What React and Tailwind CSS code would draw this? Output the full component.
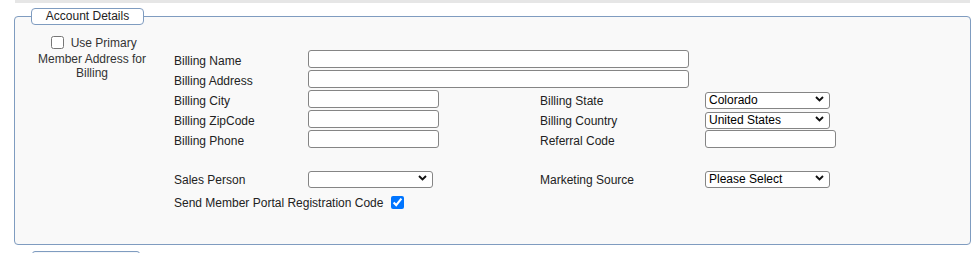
import React from 'react';

const Chevron = () => (
    <svg
        className="pointer-events-none absolute right-[6px] top-1/2 -translate-y-1/2"
        width="9"
        height="6"
        viewBox="0 0 9 6"
        fill="none"
    >
        <path d="M1 1l3.5 3.5L8 1" stroke="#111" strokeWidth="1.9" />
    </svg>
);

const Select = ({ value, options = [] }) => (
    <div className="relative w-[125px] h-[17px]">
        <select
            defaultValue={value}
            className="appearance-none w-full h-full pl-[3px] pr-[18px] bg-white border border-[#858585] rounded-[3px] text-[12px] leading-[15px] text-black outline-none"
        >
            {options.map((o) => (
                <option key={o} value={o}>
                    {o}
                </option>
            ))}
        </select>
        <Chevron />
    </div>
);

const TextInput = ({ wide }) => (
    <input
        type="text"
        className={`${wide ? 'w-[381px]' : 'w-[131px]'} h-[18px] bg-white border border-[#858585] rounded-[3px] px-[3px] text-[12px] outline-none`}
    />
);

const Label = ({ children }) => <div className="pt-[3px]">{children}</div>;

const App = () => {
    return (
        <div className="w-[975px] h-[253px] overflow-hidden bg-white font-['Liberation_Sans',Arial,sans-serif] text-[12px] text-[#222]">
            {/* bottom edge of the panel above */}
            <div className="ml-[15px] w-[955px] h-[3px] bg-[#e6e6e6]" />

            <fieldset className="mt-[5px] ml-[14px] w-[957px] border border-[#7f9cc0] rounded-[4px] bg-[#f9f9f9]">
                <legend className="ml-[16px] w-[113px] h-[17px] border border-[#7f9cc0] rounded-[4px] bg-white text-left">
                    <div className="w-full text-center leading-[15px] text-[#222]">Account Details</div>
                </legend>

                <div className="flex pt-[8px] pb-[28px]">
                    {/* Use primary address */}
                    <div className="ml-[15px] w-[124px] text-center leading-[14px] text-[#333]">
                        <label>
                            <input type="checkbox" className="ml-[4px] mr-[3px] my-[3px] align-[-2px]" /> Use Primary Member Address for Billing
                        </label>
                    </div>

                    {/* Billing fields */}
                    <div className="ml-[20px] mt-[16px] grid grid-cols-[134px_232px_165px_auto] grid-rows-[20px_20px_20px_20px_20px_19px_20px_28px] items-center">
                        <Label>Billing Name</Label>
                        <div className="col-span-3"><TextInput wide /></div>

                        <Label>Billing Address</Label>
                        <div className="col-span-3"><TextInput wide /></div>

                        <Label>Billing City</Label>
                        <div><TextInput /></div>
                        <Label>Billing State</Label>
                        <Select value="Colorado" options={['Colorado', 'Arizona', 'Utah', 'Wyoming']} />

                        <Label>Billing ZipCode</Label>
                        <div><TextInput /></div>
                        <Label>Billing Country</Label>
                        <Select value="United States" options={['United States', 'Canada']} />

                        <Label>Billing Phone</Label>
                        <div><TextInput /></div>
                        <Label>Referral Code</Label>
                        <div><TextInput /></div>

                        <div className="col-span-4" />

                        <Label>Sales Person</Label>
                        <Select value="" options={['']} />
                        <Label>Marketing Source</Label>
                        <Select value="Please Select" options={['Please Select', 'Web', 'Referral']} />

                        <div className="col-span-4 flex items-center">
                            <span className="pt-[2px]">Send Member Portal Registration Code</span>
                            <input type="checkbox" defaultChecked className="ml-[8px]" />
                        </div>
                    </div>
                </div>
            </fieldset>

            {/* top of the button below */}
            <div className="mt-[6px] ml-[32px] w-[108px] h-[12px] border border-[#7f9cc0] rounded-t-[3px] bg-[#f4f6f9]" />
        </div>
    );
};

export default App;
